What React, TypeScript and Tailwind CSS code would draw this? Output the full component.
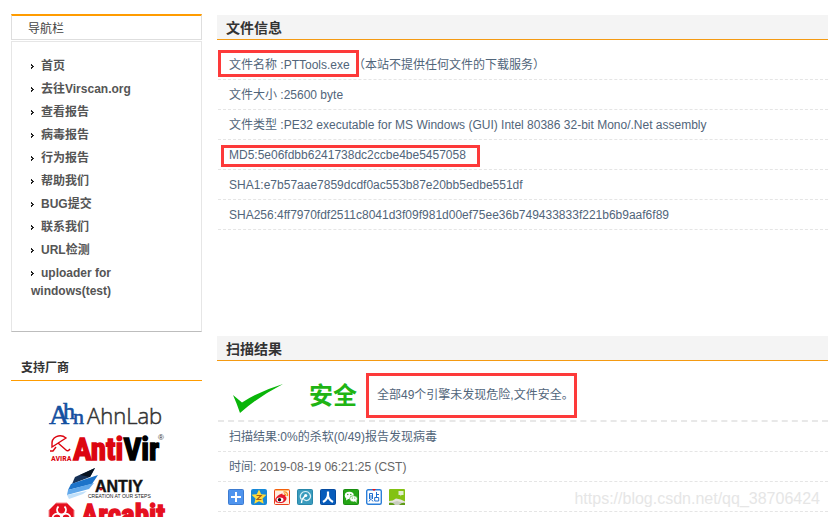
import type { ReactNode } from "react";

const navItems = [
  "首页",
  "去往Virscan.org",
  "查看报告",
  "病毒报告",
  "行为报告",
  "帮助我们",
  "BUG提交",
  "联系我们",
  "URL检测",
  "uploader for windows(test)",
];

function NavArrow() {
  return (
    <svg className="inline-block w-[10px] h-[5px]" viewBox="0 0 10 5" shapeRendering="crispEdges" aria-hidden="true">
      <path d="M0 0h1v1h1v1h1v1h-1v1h-1v1h-1v-1h0v-1h1v-1h-1z" fill="#222" />
      <path d="M1 1h1v3h-1z" fill="#222" />
    </svg>
  );
}

function Sidebar() {
  return (
    <nav aria-label="导航栏">
      <h2 className="h-[26px] border border-t-2 border-[#dedede] border-t-[#ff9c00] pl-4 text-xs leading-[26px] text-[#444]">
        导航栏
      </h2>
      <div className="mt-px h-[291px] border border-[#e6e6e6] border-b-[#bdbdbd] px-[19px] pt-[15px]">
        <ul className="flex flex-col gap-[5px] text-xs font-bold leading-[18px] text-[#555]">
          {navItems.map((item) => (
            <li key={item}>
              <NavArrow />
              <a href="#">{item}</a>
            </li>
          ))}
        </ul>
      </div>
    </nav>
  );
}

function AhnLabLogo() {
  return (
    <svg width="120" height="32" viewBox="0 0 120 32" role="img" aria-label="AhnLab">
      <text fontFamily="'Liberation Serif', serif" fill="#1450a0" stroke="#1450a0" strokeWidth="0.6">
        <tspan x="2" y="26" fontSize="28">A</tspan>
        <tspan x="16" y="21" fontSize="24">h</tspan>
        <tspan x="26" y="26" fontSize="22">n</tspan>
      </text>
      <text x="40" y="26" fontSize="22" fontFamily="'Open Sans', sans-serif" fontWeight="300" fill="#333" stroke="#333" strokeWidth="0.5">
        AhnLab
      </text>
    </svg>
  );
}

function AntiVirLogo() {
  return (
    <svg width="120" height="36" viewBox="0 0 120 36" role="img" aria-label="Avira AntiVir">
      <g fill="none" stroke="#dc0510" strokeWidth="1.4">
        <path d="M5 15C4 7 13 3 19 8L5 17Z" />
        <path d="M11 13L19 20q2 2 4-1M3 21h3l3-4" />
      </g>
      <text x="4" y="31" fontSize="8" fontWeight="700" fontFamily="'Liberation Sans Narrow', 'Roboto Condensed', 'Liberation Sans', sans-serif" fill="#dc0510">
        AVIRA
      </text>
      <text x="26" y="30" fontSize="31" fontWeight="700" strokeWidth="1.4" fontFamily="'Liberation Sans Narrow', 'Roboto Condensed', 'Open Sans Condensed', 'Liberation Sans', sans-serif" fill="#dc0510" stroke="#dc0510">
        Anti<tspan fill="#000" stroke="#000">Vir</tspan>
      </text>
      <text x="111" y="10" fontSize="8" fontFamily="'Liberation Sans', sans-serif" fill="#333">®</text>
    </svg>
  );
}

function AntiyLogo() {
  return (
    <svg width="120" height="34" viewBox="0 0 120 34" role="img" aria-label="Antiy">
      <path d="M28 11L48 2L43 11L25 18Z" fill="#173257" />
      <path d="M33 9L48 2L43 11L38 10Z" fill="#07121f" />
      <path d="M24 18L51 9L45 18L21 24Z" fill="#1c73c9" />
      <path d="M21 24L47 17L42 23L20 29Z" fill="#61a8ea" />
      <path d="M20 29L40 25L36 28L22 33Z" fill="#c0e0fa" />
      <text x="48" y="26" fontSize="16" fontWeight="700" stroke="#111" strokeWidth="0.4" fontFamily="'Liberation Sans', sans-serif" fill="#111">
        ANTIY
      </text>
      <circle cx="54" cy="23" r="1.6" fill="#d3121d" />
      <text x="41" y="32" fontSize="5" fontFamily="'Liberation Sans', sans-serif" fill="#222">
        CREATION AT OUR STEPS
      </text>
    </svg>
  );
}

function ArcabitLogo() {
  return (
    <svg width="120" height="32" viewBox="0 0 120 32" role="img" aria-label="Arcabit">
      <path d="M9 3H20L27 10V21L20 28H9L2 21V10Z" fill="#e5101f" stroke="#f58a90" strokeWidth="1" />
      <g fill="none" stroke="#fff" strokeWidth="1.7">
        <path d="M11.500 6.500a4.500 4.500 0 1 0 6 0" />
        <path d="M5.500 18a4.500 4.500 0 1 1 7 4M23.500 18a4.500 4.500 0 1 0-7 4" />
      </g>
      <circle cx="14.500" cy="16" r="1.400" fill="#fff" />
      <text x="34" y="25" fontSize="29" fontWeight="700" strokeWidth="1.4" fontFamily="'Liberation Sans Narrow', 'Roboto Condensed', 'Liberation Sans', sans-serif" fill="#e5101f" stroke="#e5101f">
        Arcabit
      </text>
    </svg>
  );
}

function Vendors() {
  return (
    <section className="mt-[23px]">
      <h2 className="h-[26px] border-b border-[#ff9c00] pl-[10px] text-xs font-bold leading-[26px] text-[#333]">支持厂商</h2>
      <div className="flex flex-col items-center pt-[17px]">
        <AhnLabLogo />
        <AntiVirLogo />
        <AntiyLogo />
        <ArcabitLogo />
      </div>
    </section>
  );
}

function SectionTitle({ children }: { children: ReactNode }) {
  return (
    <h2 className="h-[25px] border-b border-[#f49a12] bg-[#f4f4f4] pl-[9px] text-sm font-bold leading-[26px] text-[#333]">
      {children}
    </h2>
  );
}

function Row({ children }: { children: ReactNode }) {
  return (
    <li className="ml-px h-[30px] border-b border-dashed border-[#e5e5e5] pl-[11px] text-xs leading-[30px] whitespace-nowrap">
      {children}
    </li>
  );
}

function ShareIcon({ name, children }: { name: string; children: ReactNode }) {
  return (
    <a href="#" aria-label={name}>
      <svg width="16" height="16" viewBox="0 0 16 16">
        {children}
      </svg>
    </a>
  );
}

function ShareBar() {
  return (
    <div className="-ml-px flex h-full items-center gap-[7px]">
      <ShareIcon name="分享">
        <rect x=".5" y=".5" width="15" height="15" rx="1" fill="#4f94ee" stroke="#3d7bd0" />
        <path d="M8 3v10M3 8h10" stroke="#fff" strokeWidth="2" />
      </ShareIcon>
      <ShareIcon name="QQ空间">
        <rect width="16" height="16" rx="2" fill="#1688d8" />
        <path d="M8 .5l2.200 4.700 5.300.6-4 3.600 1.200 5.400L8 12.300l-4.700 2.500 1.200-5.400-4-3.600 5.300-.6z" fill="#ffdc3c" />
        <path d="M5.500 6.500h4.700L6 10.500h4.500" fill="none" stroke="#a85b16" strokeWidth="1.100" />
      </ShareIcon>
      <ShareIcon name="新浪微博">
        <rect x=".5" y=".5" width="15" height="15" rx="1" fill="#ffeedf" stroke="#e83d19" />
        <path d="M1 1h14" stroke="#ff8700" strokeWidth="1" />
        <path d="M7 5c1-1 2-.5 1.600 1 2-.7 3 0 2.400 1.300 3 1 1.500 6.700-5 6.700S.5 10 3 7.500C4.500 6 6 5 7 5z" fill="#e5192c" />
        <ellipse cx="6" cy="10.700" rx="3.500" ry="2.300" fill="#fff" />
        <circle cx="5.500" cy="10.800" r="1.700" fill="#111" />
        <path d="M9.500 3c3.500-.5 4.500 2 4 4M10 5q2-.3 1.800 2" fill="none" stroke="#f99320" strokeWidth="1.300" />
      </ShareIcon>
      <ShareIcon name="腾讯微博">
        <rect x=".5" y=".5" width="15" height="15" rx="1" fill="#3a9bbd" stroke="#2887aa" />
        <path d="M4.500 10.500C1.500 7 4.500 2.500 8.500 2.500s6.500 4.500 4 7.500-6 1-6-.5" fill="none" stroke="#d9eff5" strokeWidth="1.200" />
        <path d="M4.500 14Q4.500 10 8 7" fill="none" stroke="#fff" strokeWidth="1.400" />
        <circle cx="8.700" cy="6.500" r="1.600" fill="#fff" />
      </ShareIcon>
      <ShareIcon name="人人网">
        <rect x=".5" y=".5" width="15" height="15" rx="1" fill="#075cbb" stroke="#064b9f" />
        <path d="M8 2.500v3Q8 10 3 13M8 6q0 4 5 7" fill="none" stroke="#fff" strokeWidth="2.200" />
      </ShareIcon>
      <ShareIcon name="微信">
        <rect x=".5" y=".5" width="15" height="15" rx="1" fill="#25a516" stroke="#198d10" />
        <ellipse cx="6.300" cy="6.400" rx="4.500" ry="3.600" fill="#fff" />
        <path d="M3.500 8.500L3 11.500l3-2z" fill="#fff" />
        <ellipse cx="10.500" cy="9.800" rx="3.900" ry="3.100" fill="#fff" stroke="#25a516" strokeWidth=".6" />
        <path d="M12 12l1.500 2v-3z" fill="#fff" />
        <g fill="#25a516">
          <circle cx="4.800" cy="5.500" r=".7" />
          <circle cx="7.800" cy="5.500" r=".7" />
          <circle cx="9.300" cy="9" r=".6" />
          <circle cx="11.800" cy="9" r=".6" />
        </g>
      </ShareIcon>
      <ShareIcon name="百度贴吧">
        <rect x=".7" y=".7" width="14.600" height="14.600" rx="1.500" fill="#fff" stroke="#2b7fd9" strokeWidth="1.400" />
        <path d="M6 0h4L8 2z" fill="#e11" />
        <path d="M3.500 10V4.500h3V10M5 6v3.500L3 12.500M5.500 10.500l1.500 2M10.500 3v5M10.500 5.500H13M8.700 8.500h4v3.500h-4z" fill="none" stroke="#1e6fd0" strokeWidth="1" />
      </ShareIcon>
      <ShareIcon name="豆瓣相册">
        <rect width="16" height="16" rx="1" fill="#83c213" />
        <path d="M9.500 2h5v4h-2l-1 1.500V6h-2z" fill="#e2edd0" />
        <path d="M0 12Q4 12 7 9.500q5 .5 9 3v1.500H0z" fill="#e6e4de" />
        <path d="M0 13.500h3L8 12l5 1.500h3V16H0z" fill="#c9cdc0" />
        <path d="M0 16v-2q4-1 6 2zM10 16q3-3 6-2v2z" fill="#5f9b18" />
      </ShareIcon>
    </div>
  );
}

function FileInfo() {
  return (
    <section>
      <SectionTitle>文件信息</SectionTitle>
      <ul className="pt-[10px]">
        <Row>
          <span className="relative">
            文件名称 :PTTools.exe
            <span className="absolute -left-[11px] -right-[9px] -top-2 -bottom-[5px] z-10 border-3 border-[#fd3a3a]" />
          </span>{" "}
          （本站不提供任何文件的下载服务）
        </Row>
        <Row>文件大小 :25600 byte</Row>
        <Row>文件类型 :PE32 executable for MS Windows (GUI) Intel 80386 32-bit Mono/.Net assembly</Row>
        <Row>
          <span className="relative">
            MD5:5e06fdbb6241738dc2ccbe4be5457058
            <span className="absolute -left-2 -right-[14px] -top-[3px] -bottom-[5px] border-3 border-[#fd3a3a]" />
          </span>
        </Row>
        <Row>SHA1:e7b57aae7859dcdf0ac553b87e20bb5edbe551df</Row>
        <Row>SHA256:4ff7970fdf2511c8041d3f09f981d00ef75ee36b749433833f221b6b9aaf6f89</Row>
      </ul>
    </section>
  );
}

function ScanResult() {
  return (
    <section className="mt-[106px]">
      <SectionTitle>扫描结果</SectionTitle>
      <div className="ml-px flex h-[61px] items-center border-b-2 border-dashed border-[#e8e8e8] pt-[10px]">
        <svg className="ml-[15px]" width="51" height="36" viewBox="0 0 51 36" aria-hidden="true">
          <path d="M0 17L9 24.500Q27 13 50 6Q25 19 7 35Q4 26 0 17Z" fill="#09b509" />
        </svg>
        <strong className="ml-[25px] text-2xl leading-6 text-[#20b414]">安全</strong>
        <p className="ml-[9px] border-3 border-[#fd3a3a] py-[10px] pl-2 text-xs leading-[19px] whitespace-nowrap">
          全部49个引擎未发现危险,文件安全。
        </p>
      </div>
      <ul>
        <Row>扫描结果:0%的杀软(0/49)报告发现病毒</Row>
        <Row>
          时间: <span className="text-[#666]">2019-08-19 06:21:25 (CST)</span>
        </Row>
        <Row>
          <ShareBar />
        </Row>
      </ul>
    </section>
  );
}

export default function App() {
  return (
    <div className="relative flex h-screen gap-[15px] overflow-hidden bg-white pl-[11px] font-['Liberation_Sans','Noto_Sans_CJK_SC',sans-serif] text-[#51657a]">
      <aside className="w-[191px] shrink-0 pt-[14px]">
        <Sidebar />
        <Vendors />
      </aside>
      <main className="min-w-0 flex-1 pt-[15px]">
        <FileInfo />
        <ScanResult />
      </main>
      <p className="absolute right-2 bottom-2 text-base leading-5 text-[#e6e6e6]">https://blog.csdn.net/qq_38706424</p>
    </div>
  );
}
